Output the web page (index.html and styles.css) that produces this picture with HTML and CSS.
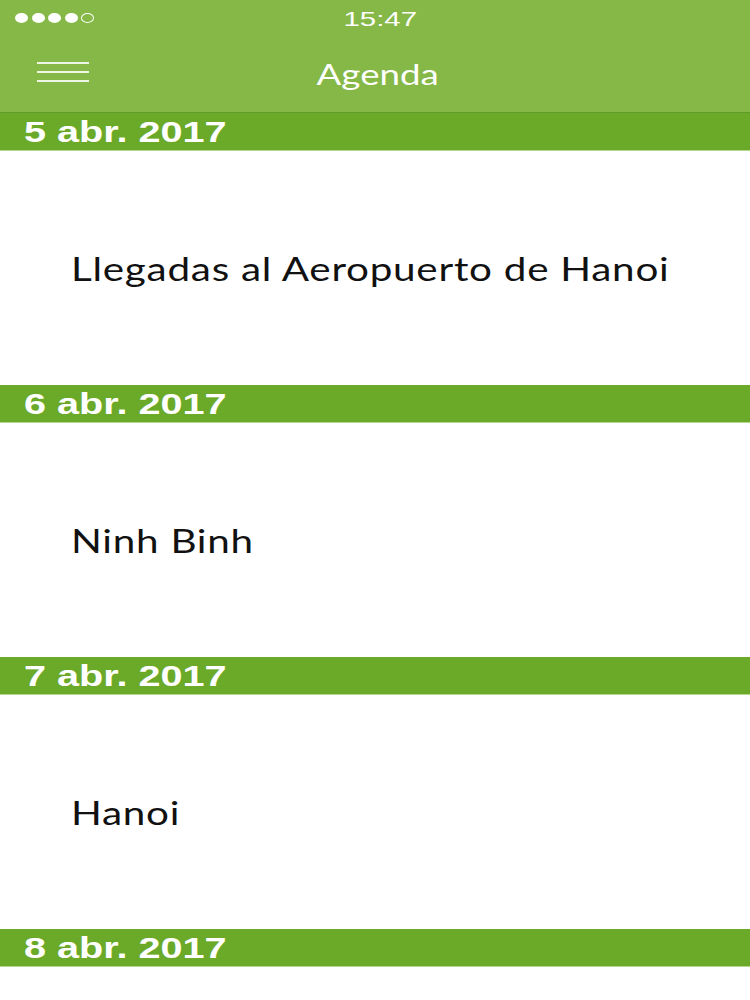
FILE: index.html
```html
<!DOCTYPE html>
<html>
<head>
<meta charset="utf-8">
<link rel="stylesheet" href="styles.css">
</head>
<body>
<div class="header">
  <div class="status">
    <div class="signal">
      <span class="dot"></span><span class="dot"></span><span class="dot"></span><span class="dot"></span><span class="dot empty"></span>
    </div>
    <span class="time">15:47</span>
  </div>
  <div class="nav">
    <div class="menu"><span></span><span></span><span></span></div>
    <span class="title">Agenda</span>
  </div>
</div>
<div class="list">
  <div class="date"><span class="wide">5 abr. 2017</span></div>
  <div class="item"><span class="wide-item">Llegadas al Aeropuerto de Hanoi</span></div>
  <div class="date"><span class="wide">6 abr. 2017</span></div>
  <div class="item"><span class="wide-item">Ninh Binh</span></div>
  <div class="date"><span class="wide">7 abr. 2017</span></div>
  <div class="item"><span class="wide-item">Hanoi</span></div>
  <div class="date"><span class="wide">8 abr. 2017</span></div>
  <div class="item"></div>
</div>
</body>
</html>
```
FILE: styles.css
```css
html, body {
  margin: 0;
  padding: 0;
  background: #ffffff;
  width: 750px;
  height: 1000px;
  overflow: hidden;
}
.header {
  background: #85b846;
  height: 112px;
  border-bottom: 1px solid #5f9a2a;
  color: #ffffff;
}
.status {
  height: 37px;
  display: flex;
  align-items: center;
  justify-content: center;
  padding-left: 10px;
  position: relative;
}
.signal {
  position: absolute;
  left: 15px;
  top: 13px;
  display: flex;
  gap: 3.5px;
}
.dot {
  width: 13px;
  height: 10px;
  border-radius: 50%;
  background: #ffffff;
  box-sizing: border-box;
}
.dot.empty {
  background: transparent;
  border: 1px solid #ffffff;
}
.time {
  display: inline-block;
  font-family: "Liberation Sans", Arial, sans-serif;
  font-size: 21px;
  transform: scaleX(1.4);
}
.nav {
  height: 75px;
  display: flex;
  align-items: center;
  justify-content: center;
  padding-left: 6px;
  position: relative;
}
.menu {
  position: absolute;
  left: 37px;
  top: 25px;
  width: 52px;
  display: flex;
  flex-direction: column;
  gap: 7px;
}
.menu span {
  display: block;
  height: 2px;
  background: #eef6e4;
}
.title {
  display: inline-block;
  font-family: "Lato", "Noto Sans", sans-serif;
  font-size: 28px;
  transform: scaleX(1.31);
  margin-top: -2px;
}
.date {
  background: #6aaa28;
  height: 38px;
  line-height: 38px;
  color: #ffffff;
  font-family: "Liberation Sans", Arial, sans-serif;
  font-weight: bold;
  font-size: 30px;
  padding-left: 24px;
  border-bottom: 1px solid #b4d690;
  box-sizing: border-box;
}
.wide {
  display: inline-block;
  transform: scaleX(1.32);
  transform-origin: left center;
}
.item {
  height: 234px;
  display: flex;
  align-items: center;
  padding-left: 71px;
  font-family: "Lato", "Noto Sans", sans-serif;
  font-size: 33px;
  color: #111111;
  letter-spacing: 0.6px;
}
.wide-item {
  display: inline-block;
  transform: scaleX(1.225);
  transform-origin: left center;
}
```
